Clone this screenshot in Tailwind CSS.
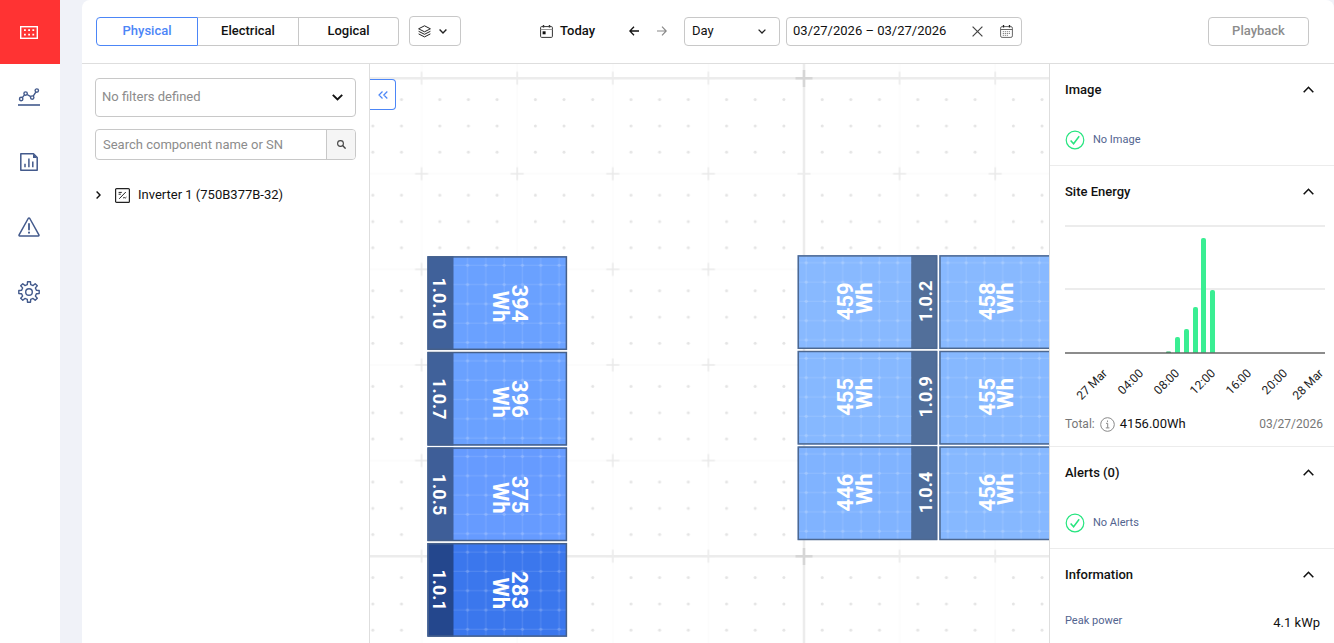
<!DOCTYPE html>
<html lang="en">
<head>
<meta charset="utf-8">
<title>Site layout</title>
<script src="https://cdn.jsdelivr.net/npm/@tailwindcss/browser@4"></script>
</head>
<body class="flex h-screen overflow-hidden bg-[#f0f2f8] font-[Roboto,sans-serif] text-[13px] leading-5 text-[#111]">

<nav class="mr-[22px] flex w-[60px] shrink-0 flex-col bg-white text-[#435a8c]" aria-label="Main">
  <a href="#layout" aria-label="Layout" class="flex h-16 items-center justify-center bg-[#ff3333] pr-[2px] text-white">
    <svg class="h-[13px] w-[18px]" viewBox="0 0 18 13" fill="none" stroke="currentColor"><rect x=".7" y=".7" width="16.6" height="11.6" stroke-width="1.4"/><path d="M4 4.2h11M4 8.6h11" stroke-width="1.8" stroke-dasharray="1.8 2.4"/></svg>
  </a>
  <a href="#analysis" aria-label="Analysis" class="flex h-[65px] items-center justify-center pr-[2px]">
    <svg class="h-[18px] w-[22px]" viewBox="0 0 22 18" fill="none" stroke="currentColor" stroke-width="1.4"><circle cx="3.2" cy="11" r="1.7"/><circle cx="7.6" cy="5.6" r="1.7"/><circle cx="14.2" cy="9.6" r="1.7"/><circle cx="18.8" cy="2.6" r="1.7"/><path d="M4.3 9.6l2.2-2.7M9.1 6.500l3.6 2.200M15.200 8.100l2.600-4"/><path d="M0 17h22" stroke-width="1.600"/></svg>
  </a>
  <a href="#reports" aria-label="Reports" class="flex h-[65px] items-center justify-center pr-[2px]">
    <svg class="h-[18px] w-[18px]" viewBox="0 0 18 18" fill="none" stroke="currentColor" stroke-width="1.500"><path d="M.8.8h12.700l3.700 3.800v12.600H.8z" stroke-linejoin="round"/><path d="M13 .8v4.200h4.200z" fill="currentColor" stroke="none"/><path d="M5 14.200v-3.500M8.900 14.200V5.500M12.800 14.200V8.500"/></svg>
  </a>
  <a href="#alerts" aria-label="Alerts" class="flex h-[65px] items-center justify-center pr-[2px]">
    <svg class="h-[20px] w-[22px]" viewBox="0 0 22 20" fill="none" stroke="currentColor" stroke-width="1.500" stroke-linejoin="round" stroke-linecap="round"><path d="M10.200 1.500Q11 .5 11.800 1.500L20.900 17.800Q21.300 19 20.200 19.100H1.800Q.7 19 1.100 17.800z"/><path d="M11 7v5.500" stroke-width="1.800"/><path d="M11 15.600v.1" stroke-width="2"/></svg>
  </a>
  <a href="#settings" aria-label="Settings" class="flex h-[65px] items-center justify-center pr-[2px]">
    <svg class="h-[22px] w-[22px]" viewBox="0 0 22 22" fill="none" stroke="currentColor" stroke-width="1.400" stroke-linejoin="round"><circle cx="11" cy="11" r="3.300"/><path d="M9.300 3.600L9.500 .8h3l.2 2.800 2.400 1 2.100-1.900 2.100 2.100-1.900 2.100 1 2.400 2.800.2v3l-2.800.2-1 2.400 1.900 2.100-2.100 2.100-2.100-1.900-2.400 1-.2 2.800h-3l-.2-2.800-2.400-1-2.100 1.900-2.100-2.100 1.900-2.100-1-2.400-2.800-.2v-3l2.800-.2 1-2.400-1.900-2.100 2.100-2.100 2.100 1.900z"/></svg>
  </a>
</nav>

<div class="flex min-w-0 flex-1 flex-col overflow-hidden rounded-t-lg bg-white">
  <header class="flex h-16 shrink-0 items-center border-b border-[#dedede] pr-[25px] pb-px pl-[14px]">
    <div class="flex font-medium" role="group" aria-label="View">
      <button class="h-[29px] w-[102px] rounded-l-[4px] border border-[#4c86f7] text-[#4c86f7]">Physical</button>
      <button class="h-[29px] w-[101px] border-y border-r border-[#c8c8c8]">Electrical</button>
      <button class="h-[29px] w-[100px] rounded-r-[4px] border-y border-r border-[#c8c8c8]">Logical</button>
    </div>
    <button aria-label="Layers" class="ml-[10px] flex h-[30px] w-[52px] items-center gap-[8px] rounded-[4px] border border-[#c8c8c8] pl-[8px]">
      <svg class="h-[13px] w-[13px]" viewBox="0 0 13 13" fill="none" stroke="#222" stroke-linejoin="round"><path d="M6.500 .8l5.900 3-5.900 3-5.900-3z"/><path d="M.6 6.300l5.900 3 5.900-3M.6 8.900l5.900 3 5.900-3"/></svg>
      <svg class="h-[5px] w-[8px]" viewBox="0 0 8 5" fill="none" stroke="#222" stroke-width="1.400"><path d="M.6.6L4 4 7.400.6"/></svg>
    </button>
    <button class="ml-[79px] flex items-center gap-[7px] font-medium">
      <svg class="h-[13px] w-[13px]" viewBox="0 0 13 13" fill="none" stroke="#333"><rect x=".6" y="1.600" width="11.800" height="10.800" rx="1"/><path d="M.6 4.500h11.800" stroke="#999"/><path d="M3.500 0v2.600M9.500 0v2.600" stroke-width="1.400"/><path d="M2.600 6.300h3v3h-3z" fill="#111" stroke="none"/></svg>
      Today
    </button>
    <button aria-label="Previous" class="ml-[34px]"><svg class="h-[10px] w-[10px]" viewBox="0 0 10 10" fill="none" stroke="#111" stroke-width="1.300"><path d="M10 5H1M5 .7L.8 5 5 9.300"/></svg></button>
    <button aria-label="Next" class="ml-[18px]"><svg class="h-[10px] w-[10px]" viewBox="0 0 10 10" fill="none" stroke="#888" stroke-width="1.200"><path d="M0 5h9M5 .7L9.200 5 5 9.300"/></svg></button>
    <div class="relative ml-[17px] flex items-center">
      <select aria-label="Period" class="h-[29px] w-24 appearance-none rounded-[4px] border border-[#c8c8c8] bg-white px-[7px]"><option>Day</option></select>
      <svg class="pointer-events-none absolute right-[14px] h-[5px] w-[8px]" viewBox="0 0 8 5" fill="none" stroke="#222" stroke-width="1.300"><path d="M.6.6L4 4 7.400.6"/></svg>
    </div>
    <div class="ml-[6px] flex h-[29px] w-[236px] items-center rounded-[4px] border border-[#c8c8c8] pr-[8px] pl-[6px]">
      <input aria-label="Date range" value="03/27/2026 – 03/27/2026" class="min-w-0 flex-1 bg-transparent outline-none">
      <button aria-label="Clear dates"><svg class="h-[11px] w-[11px]" viewBox="0 0 11 11" stroke="#444" stroke-width="1.200"><path d="M.6.6l9.800 9.800M10.400.6L.6 10.400"/></svg></button>
      <button aria-label="Open calendar" class="ml-[17px]"><svg class="h-[13px] w-[13px]" viewBox="0 0 13 13" fill="none" stroke="#666"><rect x=".6" y="1.600" width="11.800" height="10.800" rx="1.500"/><path d="M.6 4.500h11.800"/><path d="M3.500 0v2.600M9.500 0v2.600" stroke="#222" stroke-width="1.300"/><path d="M2.800 6.700h7.600M2.800 8.500h7.600M2.800 10.300h5.600" stroke-dasharray="1 1"/></svg></button>
    </div>
    <button class="ml-auto h-[29px] w-[101px] rounded-[4px] border border-[#c8c8c8] font-medium text-[#8c8c8c]">Playback</button>
  </header>

  <div class="flex min-h-0 flex-1">
    <aside class="flex w-[288px] shrink-0 flex-col border-r border-[#dedede] px-[13px] pt-[14px]">
      <div class="relative flex items-center">
        <select aria-label="Filters" class="h-[39px] w-full appearance-none rounded-[4px] border border-[#c8c8c8] bg-white px-[6px] pb-px text-[#8c8c8c]"><option>No filters defined</option></select>
        <svg class="pointer-events-none absolute right-[13px] h-[7px] w-[11px]" viewBox="0 0 11 7" fill="none" stroke="#111" stroke-width="1.900"><path d="M.8.8l4.700 4.700L10.200.8"/></svg>
      </div>
      <div class="mt-[12px] flex h-[31px] overflow-hidden rounded-[4px] border border-[#c8c8c8]">
        <input aria-label="Search component name or SN" placeholder="Search component name or SN" class="min-w-0 flex-1 px-[7px] outline-none placeholder:text-[#8c8c8c]">
        <button aria-label="Search" class="flex w-[29px] items-center justify-center border-l border-[#c8c8c8] bg-[#f5f5f5]"><svg class="h-[9px] w-[9px]" viewBox="0 0 9 9" fill="none" stroke="#444"><circle cx="3.500" cy="3.500" r="2.900" stroke-width="1.100"/><path d="M5.600 5.600l3 3" stroke-width="1.400"/></svg></button>
      </div>
      <button class="mt-[25px] flex items-center pl-px text-left">
        <svg class="h-[8px] w-[5px]" viewBox="0 0 5 8" fill="none" stroke="#111" stroke-width="1.400"><path d="M.6.6L4 4 .6 7.400"/></svg>
        <svg class="mr-[8px] ml-[14px] h-[15px] w-[15px]" viewBox="0 0 15 15" fill="none" stroke="#222"><rect x=".6" y=".6" width="13.800" height="13.800" rx="1" stroke-width="1.200"/><path d="M4.200 10.800l6.600-6.800M3.600 4.400h3.200M3.600 6.200h2.200M8 10.300q.9-1.400 1.700-.6t1.700-.6"/></svg>
        Inverter 1 (750B377B-32)
      </button>
    </aside>

    <main class="relative min-w-0 flex-1 overflow-hidden">
      <svg class="h-full w-full" aria-label="Physical layout" font-family="Roboto, sans-serif" font-weight="700" fill="#fff">
        <defs>
          <pattern id="minor" x="424" y="4.200" width="95.600" height="95.600" patternUnits="userSpaceOnUse">
            <path d="M10 0v95.600M0 10h95.600" stroke="#fafafa"/>
            <path d="M10 3.500v13M3.500 10h13" stroke="#e9e9e9" stroke-width="1.500"/>
            <g fill="#e4e4e4">
              <circle cx="28.200" cy="31.400" r="1.500"/><circle cx="56.800" cy="31.400" r="1.500"/><circle cx="85.500" cy="31.400" r="1.500"/>
              <circle cx="28.200" cy="57.700" r="1.500"/><circle cx="56.800" cy="57.700" r="1.500"/><circle cx="85.500" cy="57.700" r="1.500"/>
              <circle cx="28.200" cy="84" r="1.500"/><circle cx="56.800" cy="84" r="1.500"/><circle cx="85.500" cy="84" r="1.500"/>
            </g>
          </pattern>
          <pattern id="cells" x="-5.500" y="-1" width="18.300" height="19.300" patternUnits="userSpaceOnUse">
            <path d="M9 0v19.300M0 10h18.300" stroke="#fff" stroke-opacity=".1" stroke-width="1.300"/>
            <circle cx="9" cy="10" r="1.600" fill="#fff" fill-opacity=".18"/>
          </pattern>
          <pattern id="cellsR" x="-.500" y="-2.500" width="18.300" height="19.300" patternUnits="userSpaceOnUse">
            <path d="M9 0v19.300M0 10h18.300" stroke="#fff" stroke-opacity=".1" stroke-width="1.300"/>
            <circle cx="9" cy="10" r="1.600" fill="#fff" fill-opacity=".18"/>
          </pattern>
          <g id="faceL"><rect x="26" y="1" width="113" height="92" fill="url(#cells)"/><rect x=".6" y=".6" width="138.300" height="92.400" fill="none" stroke="#46608a" stroke-width="1.500"/></g>
          <g id="faceR"><rect x="1" y="1" width="113" height="92" fill="url(#cellsR)"/><rect x=".6" y=".6" width="138.300" height="92.400" fill="none" stroke="#4d6890" stroke-width="1.500"/></g>
        </defs>
        <rect width="100%" height="100%" fill="url(#minor)"/>
        <path d="M0 14.200H2000M0 492.200H2000M434 0V2000" stroke="#ececec" stroke-width="2.500"/>
        <path d="M425.500 14.200h17M434 6v17M425.500 492.200h17M434 484v17" stroke="#d6d6d6" stroke-width="2.500"/>

        <g transform="translate(57.500 192.300)">
          <path d="M0 0h139.500v93.500H0z" fill="#6aa1ff"/><path d="M0 0h26v93.500H0z" fill="#40619a"/><use href="#faceL"/>
          <text transform="translate(5.500 47) rotate(90)" font-size="18" text-anchor="middle">1.0.10</text>
          <g font-size="22" text-anchor="end"><text transform="translate(84 66) rotate(90)">394</text><text transform="translate(65.500 66) rotate(90)">Wh</text></g>
        </g>
        <g transform="translate(57.500 287.900)">
          <path d="M0 0h139.500v93.500H0z" fill="#6aa1ff"/><path d="M0 0h26v93.500H0z" fill="#40619a"/><use href="#faceL"/>
          <text transform="translate(5.500 47) rotate(90)" font-size="18" text-anchor="middle">1.0.7</text>
          <g font-size="22" text-anchor="end"><text transform="translate(84 66) rotate(90)">396</text><text transform="translate(65.500 66) rotate(90)">Wh</text></g>
        </g>
        <g transform="translate(57.500 383.500)">
          <path d="M0 0h139.500v93.500H0z" fill="#669bff"/><path d="M0 0h26v93.500H0z" fill="#3e5e98"/><use href="#faceL"/>
          <text transform="translate(5.500 47) rotate(90)" font-size="18" text-anchor="middle">1.0.5</text>
          <g font-size="22" text-anchor="end"><text transform="translate(84 66) rotate(90)">375</text><text transform="translate(65.500 66) rotate(90)">Wh</text></g>
        </g>
        <g transform="translate(57.500 479.100)">
          <path d="M0 0h139.500v93.500H0z" fill="#3b77ed"/><path d="M0 0h26v93.500H0z" fill="#24478d"/><use href="#faceL"/>
          <text transform="translate(5.500 47) rotate(90)" font-size="18" text-anchor="middle">1.0.1</text>
          <g font-size="22" text-anchor="end"><text transform="translate(84 66) rotate(90)">283</text><text transform="translate(65.500 66) rotate(90)">Wh</text></g>
        </g>

        <g transform="translate(427.700 191.300)">
          <path d="M0 0h139.500v93.500H0z" fill="#88b9ff"/><path d="M113.500 0h26v93.500h-26z" fill="#526f9a"/><use href="#faceR"/>
          <text transform="translate(134 46) rotate(-90)" font-size="18" text-anchor="middle">1.0.2</text>
          <g font-size="22" text-anchor="end"><text transform="translate(55.500 27) rotate(-90)">459</text><text transform="translate(74 27) rotate(-90)">Wh</text></g>
        </g>
        <g transform="translate(427.700 286.900)">
          <path d="M0 0h139.500v93.500H0z" fill="#86b8ff"/><path d="M113.500 0h26v93.500h-26z" fill="#506e9a"/><use href="#faceR"/>
          <text transform="translate(134 46) rotate(-90)" font-size="18" text-anchor="middle">1.0.9</text>
          <g font-size="22" text-anchor="end"><text transform="translate(55.500 27) rotate(-90)">455</text><text transform="translate(74 27) rotate(-90)">Wh</text></g>
        </g>
        <g transform="translate(427.700 382.500)">
          <path d="M0 0h139.500v93.500H0z" fill="#80b3ff"/><path d="M113.500 0h26v93.500h-26z" fill="#4d6c9a"/><use href="#faceR"/>
          <text transform="translate(134 46) rotate(-90)" font-size="18" text-anchor="middle">1.0.4</text>
          <g font-size="22" text-anchor="end"><text transform="translate(55.500 27) rotate(-90)">446</text><text transform="translate(74 27) rotate(-90)">Wh</text></g>
        </g>
        <g transform="translate(569.400 191.300)">
          <path d="M0 0h139.500v93.500H0z" fill="#88b9ff"/><path d="M113.500 0h26v93.500h-26z" fill="#526f9a"/><use href="#faceR"/>
          <g font-size="22" text-anchor="end"><text transform="translate(55.500 27) rotate(-90)">458</text><text transform="translate(74 27) rotate(-90)">Wh</text></g>
        </g>
        <g transform="translate(569.400 286.900)">
          <path d="M0 0h139.500v93.500H0z" fill="#86b8ff"/><path d="M113.500 0h26v93.500h-26z" fill="#506e9a"/><use href="#faceR"/>
          <g font-size="22" text-anchor="end"><text transform="translate(55.500 27) rotate(-90)">455</text><text transform="translate(74 27) rotate(-90)">Wh</text></g>
        </g>
        <g transform="translate(569.400 382.500)">
          <path d="M0 0h139.500v93.500H0z" fill="#86b8ff"/><path d="M113.500 0h26v93.500h-26z" fill="#506e9a"/><use href="#faceR"/>
          <g font-size="22" text-anchor="end"><text transform="translate(55.500 27) rotate(-90)">456</text><text transform="translate(74 27) rotate(-90)">Wh</text></g>
        </g>
      </svg>
      <button aria-label="Collapse panel" class="absolute top-[15px] left-0 flex h-[31px] w-[26px] items-center justify-center rounded-r-[4px] border border-l-0 border-[#4c86f7] bg-white">
        <svg class="h-[8px] w-[10px]" viewBox="0 0 10 8" fill="none" stroke="#4c86f7" stroke-width="1.200"><path d="M4.500.5L1 4l3.500 3.500M9.300.5L5.800 4l3.500 3.500"/></svg>
      </button>
    </main>

    <aside class="w-[285px] shrink-0 overflow-hidden border-l border-[#dedede]">
      <section class="border-b border-[#ececec] pr-[9px] pl-[15px]">
        <button class="flex h-[51px] w-full items-center justify-between pr-[11px] font-medium">Image
          <svg class="h-[7px] w-[11px]" viewBox="0 0 11 7" fill="none" stroke="#111" stroke-width="1.600"><path d="M.7 6.200l4.800-4.900 4.800 4.900"/></svg></button>
        <p class="flex h-[50px] items-center gap-[8px] text-[11px] text-[#52648f]">
          <svg class="h-[20px] w-[20px]" viewBox="0 0 20 20" fill="none" stroke="#26e57f" stroke-width="1.200"><circle cx="10" cy="10" r="8.800"/><path d="M5.600 10.400l3 3.400 5.600-7.600" stroke-width="1.500"/></svg>No Image</p>
      </section>
      <section class="border-b border-[#ececec] pr-[9px] pb-[5px] pl-[15px]">
        <button class="flex h-[51px] w-full items-center justify-between pr-[11px] font-medium">Site Energy
          <svg class="h-[7px] w-[11px]" viewBox="0 0 11 7" fill="none" stroke="#111" stroke-width="1.600"><path d="M.7 6.200l4.800-4.900 4.800 4.900"/></svg></button>
        <svg class="w-full" viewBox="1 0 260 190" aria-label="Energy per hour" font-family="Roboto, sans-serif" font-size="12" fill="#222">
          <path d="M.500 9h260.500M.500 72h260.500" stroke="#ececec" stroke-width="2"/>
          <g fill="#3aee93">
            <path d="M102 136v-.5q0-1 1-1h3q1 0 1 1v.5z" fill="#1fb864"/>
            <path d="M111 136v-14q0-2 2-2h1q2 0 2 2v14z"/>
            <path d="M120 136v-22q0-2 2-2h1q2 0 2 2v22z"/>
            <path d="M129 136V92q0-2 2-2h1q2 0 2 2v44z"/>
            <path d="M137 136V23q0-2 2-2h1q2 0 2 2v113z"/>
            <path d="M146 136V75q0-2 2-2h1q2 0 2 2v61z"/>
          </g>
          <path d="M.500 136h260.500" stroke="#666" stroke-width="1.500"/>
          <g text-anchor="end">
            <text transform="translate(44 157) rotate(-45)">27 Mar</text>
            <text transform="translate(80 157) rotate(-45)">04:00</text>
            <text transform="translate(116 157) rotate(-45)">08:00</text>
            <text transform="translate(152 157) rotate(-45)">12:00</text>
            <text transform="translate(188 157) rotate(-45)">16:00</text>
            <text transform="translate(224 157) rotate(-45)">20:00</text>
            <text transform="translate(260 157) rotate(-45)">28 Mar</text>
          </g>
        </svg>
        <p class="flex h-[34px] items-center pr-[2px]"><span class="text-[12px] text-[#777]">Total:</span>
          <svg class="mr-[5px] ml-[5px] h-[15px] w-[15px]" viewBox="0 0 15 15" fill="none" stroke="#888"><circle cx="7.500" cy="7.500" r="6.800"/><path d="M6 6.300h1.700v4.500M5.800 10.900h3.600M7.500 3.500v1.400"/></svg>
          <span>4156.00Wh</span><time class="ml-auto text-[12px] text-[#777]">03/27/2026</time></p>
      </section>
      <section class="border-b border-[#ececec] pr-[9px] pl-[15px]">
        <button class="flex h-[51px] w-full items-center justify-between pr-[11px] font-medium">Alerts (0)
          <svg class="h-[7px] w-[11px]" viewBox="0 0 11 7" fill="none" stroke="#111" stroke-width="1.600"><path d="M.7 6.200l4.800-4.900 4.800 4.900"/></svg></button>
        <p class="flex h-[50px] items-center gap-[8px] text-[11px] text-[#52648f]">
          <svg class="h-[20px] w-[20px]" viewBox="0 0 20 20" fill="none" stroke="#26e57f" stroke-width="1.200"><circle cx="10" cy="10" r="8.800"/><path d="M5.600 10.400l3 3.400 5.600-7.600" stroke-width="1.500"/></svg>No Alerts</p>
      </section>
      <section class="pr-[9px] pl-[15px]">
        <button class="flex h-[51px] w-full items-center justify-between pr-[11px] font-medium">Information
          <svg class="h-[7px] w-[11px]" viewBox="0 0 11 7" fill="none" stroke="#111" stroke-width="1.600"><path d="M.7 6.200l4.800-4.900 4.800 4.900"/></svg></button>
        <dl class="flex justify-between pt-[11px] pr-[5px]"><dt class="text-[11px] text-[#52648f]">Peak power</dt><dd class="pt-[2px]">4.1 kWp</dd></dl>
      </section>
    </aside>
  </div>
</div>
</body>
</html>
